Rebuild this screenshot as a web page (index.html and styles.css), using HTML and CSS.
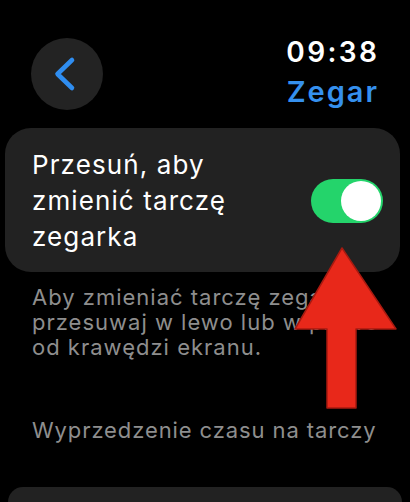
FILE: index.html
```html
<!DOCTYPE html>
<html lang="pl">
<head>
<meta charset="utf-8">
<link rel="stylesheet" href="styles.css">
</head>
<body>
<div class="screen">
  <header class="header">
    <button class="back" aria-label="Wstecz">
      <svg width="72" height="72" viewBox="0 0 72 72"><path d="M41 22 L26.5 36 L41 50" fill="none" stroke="#2f8df0" stroke-width="4.6" stroke-linecap="round" stroke-linejoin="round"/></svg>
    </button>
    <div class="titles">
      <div class="time">09:38</div>
      <div class="app">Zegar</div>
    </div>
  </header>

  <section class="card toggle-card">
    <div class="card-label">Przesuń, aby<br>zmienić tarczę<br>zegarka</div>
    <div class="switch"><div class="knob"></div></div>
  </section>

  <p class="footnote">Aby zmieniać tarczę zegarka<br>przesuwaj w lewo lub w prawo<br>od krawędzi ekranu.</p>

  <h2 class="section-title">Wyprzedzenie czasu na tarczy</h2>

  <section class="card bottom-card"></section>

  <svg class="arrow" width="410" height="502" viewBox="0 0 410 502">
    <polygon points="342,248 396,329 356,329 356,408 327,408 327,329 295,329" fill="#e8281a" stroke="#a81a10" stroke-width="1.5" stroke-linejoin="round"/>
  </svg>
</div>
</body>
</html>
```
FILE: styles.css
```css
* { box-sizing: border-box; }
html, body { margin: 0; padding: 0; background: #000; }
body { width: 410px; height: 502px; overflow: hidden; font-family: "Inter", "Noto Sans", sans-serif; }
.screen { position: relative; width: 410px; height: 502px; overflow: hidden; }

.header {
  display: flex;
  justify-content: space-between;
  align-items: flex-start;
  padding: 32px 33px 0 31px;
  height: 112px;
}
.back {
  width: 72px; height: 72px;
  margin-top: 6px;
  border: 0; padding: 0;
  border-radius: 50%;
  background: #232323;
  display: flex; align-items: center; justify-content: center;
}
.back svg { display: block; }
.titles { text-align: right; }
.time {
  color: #fff;
  font-size: 28px;
  font-weight: 600;
  line-height: 40px;
  letter-spacing: 2.4px;
  margin-right: -2.4px;
}
.app {
  color: #3590ee;
  font-size: 29px;
  font-weight: 600;
  line-height: 40px;
  letter-spacing: 2px;
  margin-right: -2px;
}

.card {
  background: #222222;
  border-radius: 26px;
  margin: 16px 10px 0 5px;
}
.toggle-card {
  height: 144px;
  display: flex;
  align-items: center;
  justify-content: space-between;
  padding: 1px 17px 0 27px;
}
.card-label {
  color: #fff;
  font-size: 26px;
  line-height: 36px;
  letter-spacing: 1.1px;
}
.switch {
  width: 72px; height: 44px;
  border-radius: 22px;
  background: #24d46b;
  padding: 2px;
  display: flex;
  justify-content: flex-end;
  flex-shrink: 0;
}
.knob {
  width: 40px; height: 40px;
  border-radius: 50%;
  background: #fff;
}

.footnote {
  margin: 13px 0 0 32px;
  color: #8e8e8e;
  font-size: 22px;
  line-height: 25px;
  letter-spacing: 1px;
  white-space: nowrap;
}
.section-title {
  margin: 57px 0 0 32px;
  color: #8e8e8e;
  font-size: 22px;
  font-weight: 400;
  line-height: 26px;
  letter-spacing: 0.9px;
}
.bottom-card {
  margin: 44px 8px 0 8px;
  height: 15px;
  border-radius: 26px 26px 0 0;
}

.arrow {
  position: absolute;
  left: 0; top: 0;
  pointer-events: none;
}
```
